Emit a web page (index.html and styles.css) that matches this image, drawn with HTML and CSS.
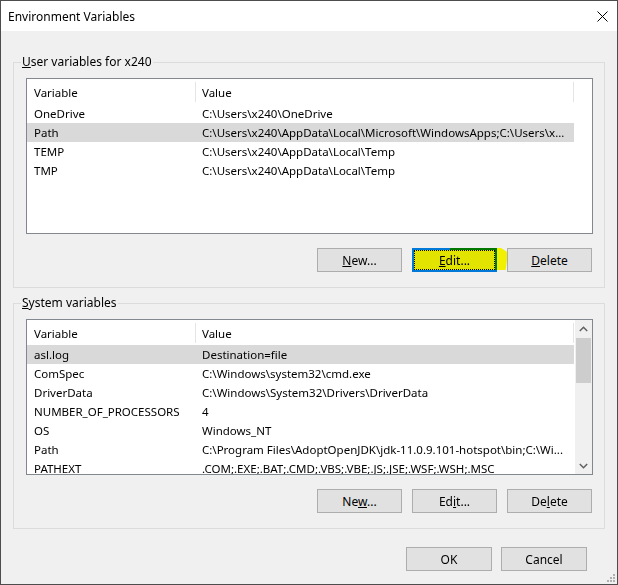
FILE: index.html
```html
<!DOCTYPE html>
<html>

<head>
   <meta name="viewport" content="width=device-width, initial-scale=1.0">
   <title>Environment Variables</title>
   <link rel="stylesheet" href="styles.css">
</head>

<body>
   <div class="window">
      <div class="titlebar">
         <span class="title">Environment Variables</span>
         <button class="close" type="button">
            <svg width="11" height="11" viewBox="0 0 11 11">
               <path d="M0.5 0.5 L10.5 10.5 M10.5 0.5 L0.5 10.5" stroke="#000" stroke-width="1" fill="none"/>
            </svg>
         </button>
      </div>

      <div class="content">
         <fieldset class="group">
            <legend><u>U</u>ser variables for x240</legend>
            <div class="list">
               <div class="list-main">
                  <div class="list-head">
                     <span class="col-var">Variable</span>
                     <span class="col-val">Value</span>
                  </div>
                  <div class="row"><span class="col-var">OneDrive</span><span class="col-val">C:\Users\x240\OneDrive</span></div>
                  <div class="row selected"><span class="col-var">Path</span><span class="col-val">C:\Users\x240\AppData\Local\Microsoft\WindowsApps;C:\Users\x...</span></div>
                  <div class="row"><span class="col-var">TEMP</span><span class="col-val">C:\Users\x240\AppData\Local\Temp</span></div>
                  <div class="row"><span class="col-var">TMP</span><span class="col-val">C:\Users\x240\AppData\Local\Temp</span></div>
               </div>
            </div>
            <div class="actions">
               <button class="btn" type="button"><u>N</u>ew...</button>
               <button class="btn btn-focus" type="button"><u>E</u>dit...<span class="marker"></span></button>
               <button class="btn" type="button"><u>D</u>elete</button>
            </div>
         </fieldset>

         <fieldset class="group group-system">
            <legend><u>S</u>ystem variables</legend>
            <div class="list">
               <div class="list-main">
                  <div class="list-head">
                     <span class="col-var">Variable</span>
                     <span class="col-val">Value</span>
                  </div>
                  <div class="row selected"><span class="col-var">asl.log</span><span class="col-val">Destination=file</span></div>
                  <div class="row"><span class="col-var">ComSpec</span><span class="col-val">C:\Windows\system32\cmd.exe</span></div>
                  <div class="row"><span class="col-var">DriverData</span><span class="col-val">C:\Windows\System32\Drivers\DriverData</span></div>
                  <div class="row"><span class="col-var">NUMBER_OF_PROCESSORS</span><span class="col-val">4</span></div>
                  <div class="row"><span class="col-var">OS</span><span class="col-val">Windows_NT</span></div>
                  <div class="row"><span class="col-var">Path</span><span class="col-val">C:\Program Files\AdoptOpenJDK\jdk-11.0.9.101-hotspot\bin;C:\Wi...</span></div>
                  <div class="row"><span class="col-var">PATHEXT</span><span class="col-val">.COM;.EXE;.BAT;.CMD;.VBS;.VBE;.JS;.JSE;.WSF;.WSH;.MSC</span></div>
               </div>
               <div class="scrollbar">
                  <span class="arrow">
                     <svg width="9" height="6" viewBox="0 0 9 6"><path d="M0.8 5 L4.5 1.3 L8.2 5" stroke="#606060" stroke-width="1.5" fill="none"/></svg>
                  </span>
                  <span class="thumb"></span>
                  <span class="track"></span>
                  <span class="arrow">
                     <svg width="9" height="6" viewBox="0 0 9 6"><path d="M0.8 1 L4.5 4.7 L8.2 1" stroke="#606060" stroke-width="1.5" fill="none"/></svg>
                  </span>
               </div>
            </div>
            <div class="actions">
               <button class="btn" type="button">Ne<u>w</u>...</button>
               <button class="btn" type="button">Ed<u>i</u>t...</button>
               <button class="btn" type="button">De<u>l</u>ete</button>
            </div>
         </fieldset>

         <div class="dialog-actions">
            <button class="btn btn-wide" type="button">OK</button>
            <button class="btn btn-wide" type="button">Cancel</button>
         </div>
      </div>

      <svg class="grip" width="10" height="10" viewBox="0 0 10 10">
         <rect x="7" y="1" width="2" height="2" fill="#b0b0b0"/>
         <rect x="4" y="4" width="2" height="2" fill="#b0b0b0"/>
         <rect x="7" y="4" width="2" height="2" fill="#b0b0b0"/>
         <rect x="1" y="7" width="2" height="2" fill="#b0b0b0"/>
         <rect x="4" y="7" width="2" height="2" fill="#b0b0b0"/>
         <rect x="7" y="7" width="2" height="2" fill="#b0b0b0"/>
      </svg>
   </div>
</body>

</html>
```

FILE: styles.css
```css
* {
   box-sizing: border-box;
}

body {
   margin: 0;
   font-family: "Segoe UI", "Noto Sans", sans-serif;
   font-size: 12px;
   color: #000;
}

.window {
   position: relative;
   width: 618px;
   height: 585px;
   border: 1px solid #4d4d4d;
   background-color: #f0f0f0;
}

.titlebar {
   height: 30px;
   display: flex;
   align-items: center;
   justify-content: space-between;
   padding-left: 7px;
   background-color: #fff;
}

.close {
   width: 30px;
   height: 30px;
   padding: 0;
   border: none;
   background: none;
   display: flex;
   align-items: center;
   justify-content: center;
}

.content {
   padding: 0 12px;
}

.group {
   margin: 23px 0 0;
   padding: 8px 11px 15px 12px;
   border: 1px solid #dcdcdc;
   min-width: 0;
}

.group-system {
   margin-top: 7px;
}

legend {
   margin-left: -5px;
   padding: 0 1px;
   line-height: 16px;
}

/* List views */
.list {
   display: flex;
   height: 156px;
   border: 1px solid #828790;
   background-color: #fff;
   font-size: 11.5px;
   overflow: hidden;
}

.list-main {
   flex: 1;
   min-width: 0;
}

.list-head {
   display: flex;
   height: 25px;
}

.list-head span {
   margin-top: 3px;
   height: 20px;
   line-height: 21px;
   border-right: 1px solid #e5e5e5;
}

.row {
   display: flex;
   width: 547px;
   height: 19px;
   line-height: 19px;
}

.row.selected {
   background-color: #d9d9d9;
}

.col-var {
   width: 169px;
   padding-left: 7px;
   white-space: nowrap;
   overflow: hidden;
   border-right: 1px solid transparent;
}

.col-val {
   width: 378px;
   padding-left: 6px;
   white-space: nowrap;
   overflow: hidden;
   border-right: 1px solid transparent;
}

.scrollbar {
   width: 17px;
   display: flex;
   flex-direction: column;
   background-color: #f0f0f0;
}

.arrow {
   height: 17px;
   display: flex;
   align-items: center;
   justify-content: center;
}

.thumb {
   margin: 1px 1px 0;
   height: 45px;
   background-color: #cdcdcd;
}

.track {
   flex: 1;
}

/* Buttons */
.actions {
   display: flex;
   justify-content: flex-end;
   gap: 10px;
   margin-top: 14px;
   margin-right: 1px;
}

.btn {
   position: relative;
   width: 85px;
   height: 24px;
   padding: 0;
   border: 1px solid #adadad;
   background-color: #e1e1e1;
   font-family: inherit;
   font-size: 12px;
   color: #000;
}

.btn-focus {
   border: 2px solid #0078d7;
   background-color: #e3e300;
   outline: 1px dotted #000;
   outline-offset: -3px;
}

.marker {
   position: absolute;
   top: -2px;
   left: 36px;
   right: -13px;
   bottom: 0;
   background-color: #ffff00;
   mix-blend-mode: multiply;
   clip-path: polygon(0 0, 88% 0, 100% 20%, 96% 100%, 0 100%);
}

.dialog-actions {
   display: flex;
   justify-content: flex-end;
   gap: 9px;
   margin-top: 18px;
   margin-right: 18px;
}

.btn-wide {
   width: 86px;
}

.grip {
   position: absolute;
   right: 1px;
   bottom: 1px;
}
```
